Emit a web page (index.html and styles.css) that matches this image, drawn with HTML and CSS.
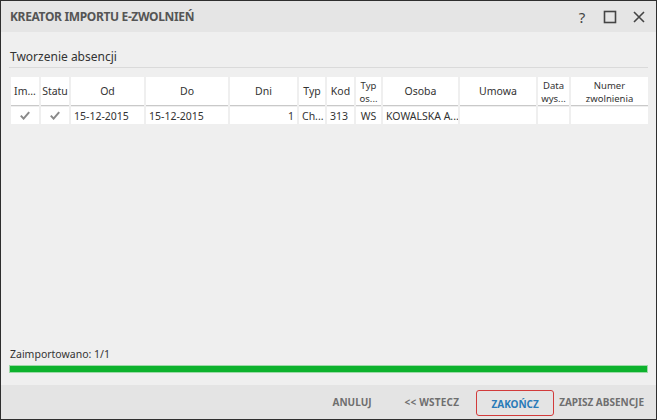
FILE: index.html
```html
<!DOCTYPE html>
<html>
<head>
<meta charset="utf-8">
<link rel="stylesheet" href="styles.css">
</head>
<body>
<div class="window">
  <div class="titlebar">
    <div class="title">KREATOR IMPORTU E-ZWOLNIEŃ</div>
    <div class="controls">
      <span class="ctl help">?</span>
      <svg class="ctl" width="14" height="14" viewBox="0 0 14 14"><rect x="1.5" y="1.5" width="11" height="11" fill="none" stroke="#444" stroke-width="1.6"/></svg>
      <svg class="ctl" width="14" height="14" viewBox="0 0 14 14"><path d="M2 2 L12 12 M12 2 L2 12" stroke="#444" stroke-width="1.6" fill="none"/></svg>
    </div>
  </div>
  <div class="main">
    <div class="heading">Tworzenie absencji</div>
    <div class="grid">
      <div class="h">Im...</div>
      <div class="h">Statu</div>
      <div class="h">Od</div>
      <div class="h">Do</div>
      <div class="h">Dni</div>
      <div class="h">Typ</div>
      <div class="h">Kod</div>
      <div class="h two">Typ<br>os...</div>
      <div class="h">Osoba</div>
      <div class="h">Umowa</div>
      <div class="h two">Data<br>wys...</div>
      <div class="h two">Numer<br>zwolnienia</div>

      <div class="d c"><svg width="10" height="9" viewBox="0 0 10 9"><path d="M0.8 4.6 L3.6 7.6 L9.2 1.2" stroke="#8a8a8a" stroke-width="2" fill="none"/></svg></div>
      <div class="d c"><svg width="10" height="9" viewBox="0 0 10 9"><path d="M0.8 4.6 L3.6 7.6 L9.2 1.2" stroke="#8a8a8a" stroke-width="2" fill="none"/></svg></div>
      <div class="d">15-12-2015</div>
      <div class="d">15-12-2015</div>
      <div class="d r">1</div>
      <div class="d">Ch...</div>
      <div class="d">313</div>
      <div class="d c">WS</div>
      <div class="d">KOWALSKA A...</div>
      <div class="d"></div>
      <div class="d"></div>
      <div class="d"></div>
    </div>
    <div class="spacer"></div>
    <div class="status">Zaimportowano: 1/1</div>
    <div class="progress"><div class="fill" style="width:100%"></div></div>
  </div>
  <div class="footer">
    <span class="btn b-cancel">ANULUJ</span>
    <span class="btn b-back">&lt;&lt; WSTECZ</span>
    <span class="btn primary">ZAKOŃCZ</span>
    <span class="btn">ZAPISZ ABSENCJE</span>
  </div>
</div>
</body>
</html>
```
FILE: styles.css
```css
html, body {
  margin: 0;
  padding: 0;
  background: #ffffff;
}
body {
  font-family: "Noto Sans", "Open Sans", sans-serif;
  color: #333;
}
.window {
  width: 657px;
  height: 420px;
  box-sizing: border-box;
  border: 1px solid #2e2e2e;
  display: flex;
  flex-direction: column;
  background: #efefef;
}
.titlebar {
  height: 31px;
  background: #e5e5e5;
  display: flex;
  align-items: center;
  justify-content: space-between;
  padding: 0 10px 0 9px;
  flex-shrink: 0;
}
.title {
  font-weight: bold;
  font-size: 12px;
  color: #555;
  letter-spacing: -0.35px;
}
.controls {
  display: flex;
  align-items: center;
  gap: 15px;
}
.ctl.help {
  font-size: 15px;
  color: #444;
  width: 12px;
  text-align: center;
}
.main {
  flex: 1;
  display: flex;
  flex-direction: column;
  padding: 0 8px 0 8px;
}
.heading {
  font-size: 12px;
  color: #333;
  padding: 16px 0 2px 1px;
  border-bottom: 1px solid #dadada;
}
.grid {
  margin-top: 9px;
  margin-left: 2px;
  display: grid;
  grid-template-columns: 28px 28px 73px 82px 67px 26px 27px 25px 75px 76px 31px 77px;
  column-gap: 2px;
  grid-template-rows: 29px 18px;
  font-size: 10.5px;
  color: #333;
}
.h {
  background: #fff;
  display: flex;
  align-items: center;
  justify-content: center;
  text-align: center;
  border-bottom: 1px solid #c9c9c9;
  line-height: 14px;
  white-space: nowrap;
  overflow: hidden;
}
.h.two {
  font-size: 9.5px;
  line-height: 13px;
  padding-top: 1px;
}
.d {
  background: #fff;
  display: flex;
  align-items: center;
  padding: 0 3px;
  white-space: nowrap;
  overflow: hidden;
  margin-top: 1px;
}
.d.c { justify-content: center; }
.d.r { justify-content: flex-end; }
.spacer { flex: 1; }
.status {
  font-size: 10.5px;
  color: #333;
  margin-bottom: 4px;
  padding-left: 1px;
}
.progress {
  height: 8px;
  border: 1px solid #9ed9a8;
  box-sizing: border-box;
  margin-bottom: 12px;
}
.fill {
  height: 100%;
  background: #0db22d;
}
.footer {
  height: 34px;
  background: #e4e4e4;
  display: flex;
  align-items: center;
  justify-content: flex-end;
  padding-right: 12px;
  flex-shrink: 0;
}
.btn {
  font-size: 10px;
  font-weight: bold;
  color: #6f6f6f;
}
.b-cancel { margin-right: 33px; }
.b-back { margin-right: 17px; letter-spacing: 0.2px; }
.btn.primary {
  color: #2a7bb8;
  border: 1px solid #d23b3b;
  border-radius: 3px;
  height: 26px;
  line-height: 26px;
  width: 78px;
  box-sizing: border-box;
  text-align: center;
  margin: 2px 5px 0 0;
}
```
